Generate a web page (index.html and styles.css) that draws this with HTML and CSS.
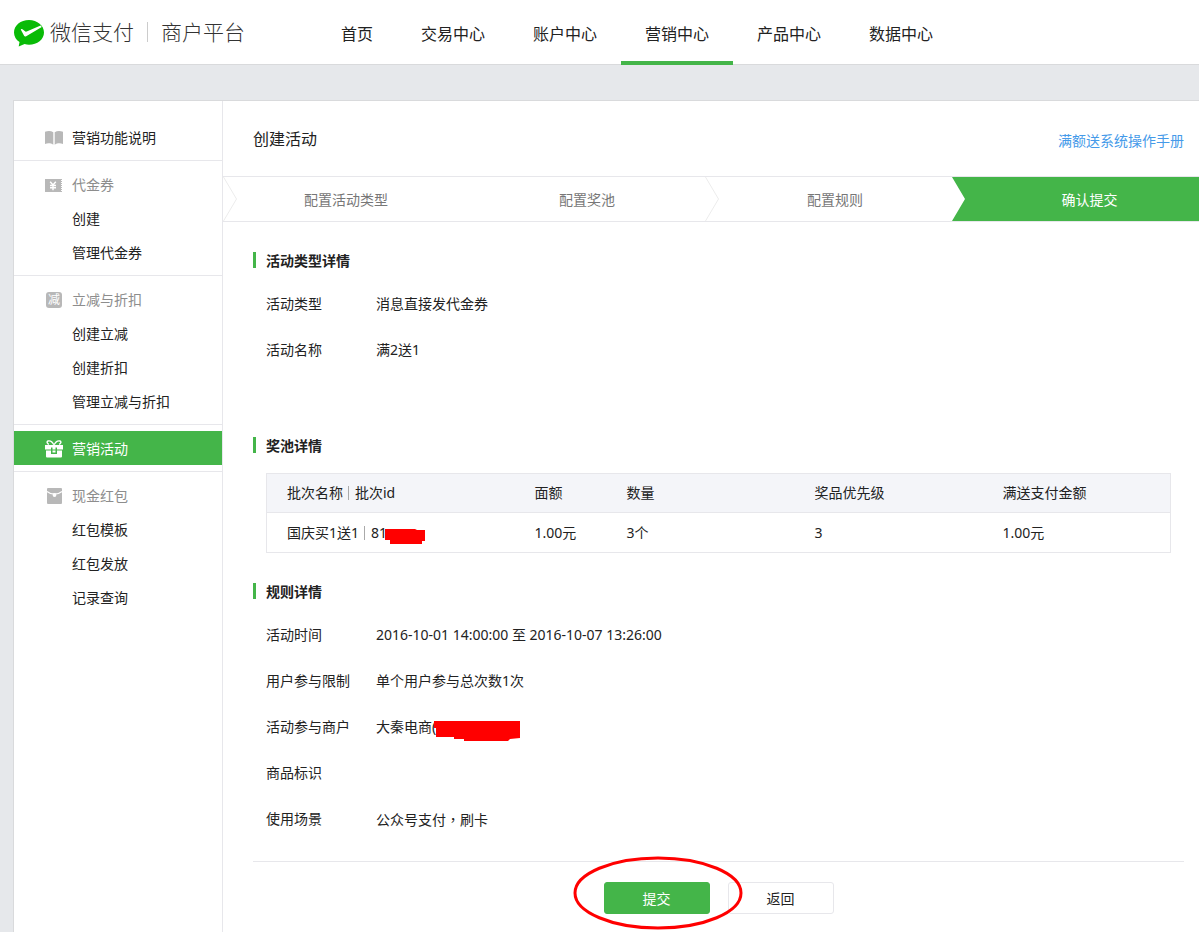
FILE: index.html
```html
<!DOCTYPE html>
<html lang="zh-CN">
<head>
<meta charset="utf-8">
<meta name="viewport" content="width=device-width, initial-scale=1">
<title>微信支付 商户平台</title>
<link rel="stylesheet" href="styles.css">
</head>
<body>
<header class="header">
  <a class="brand" href="#">
    <svg class="brand-mark" width="30" height="27" viewBox="0 0 30 27" aria-hidden="true">
      <path fill="#09bb07" d="M15 0C6.700 0 0 5.500 0 12.400c0 3.900 2.100 7.300 5.500 9.600L4.700 26.600 10.600 24.100c1.400.4 2.900.6 4.400.6 8.300 0 15-5.500 15-12.300S23.300 0 15 0z"/>
      <path fill="#fff" d="M7.100 9c.5-.3 1 0 1.400.3l2.900 2.100c.4.300.8.300 1.300.1L26.600 5.400l1.200 1.600L12.200 16.200c-.8.500-1.700.4-2.100-.5L7 10c-.2-.4-.2-.7.100-1z"/>
    </svg>
    <span class="brand-name">微信支付</span>
    <span class="brand-sub">商户平台</span>
  </a>
  <nav class="nav">
    <a href="#">首页</a>
    <a href="#">交易中心</a>
    <a href="#">账户中心</a>
    <a class="is-active" href="#">营销中心</a>
    <a href="#">产品中心</a>
    <a href="#">数据中心</a>
  </nav>
</header>

<div class="panel">
  <aside class="sidebar">
    <div class="group">
      <a class="item" href="#">
        <svg class="item-icon" width="18" height="16" viewBox="0 0 18 16"><path fill="#b8b8b8" d="M0 1.800C3 .7 6 .8 8.300 2.200V14.700C6 13.200 3 13 0 13.900zM18 1.800C15 .7 12 .8 9.700 2.200V14.700C12 13.200 15 13 18 13.900z"/></svg>
        营销功能说明
      </a>
    </div>
    <div class="group">
      <div class="item item-head">
        <svg class="item-icon" width="18" height="16" viewBox="0 0 18 16"><path fill="#b8b8b8" d="M0 2h16v13H0z"/><path stroke="#b8b8b8" stroke-width="1" stroke-dasharray="1 1" d="M16.500 2v13"/><path fill="none" stroke="#fff" stroke-width="1.400" d="M5.200 4.700 8 8l2.800-3.300M8 8v5.200M5 8.500h6M5 10.700h6"/></svg>
        代金券
      </div>
      <a class="item" href="#">创建</a>
      <a class="item" href="#">管理代金券</a>
    </div>
    <div class="group">
      <div class="item item-head">
        <span class="item-icon badge" aria-hidden="true">减</span>
        立减与折扣
      </div>
      <a class="item" href="#">创建立减</a>
      <a class="item" href="#">创建折扣</a>
      <a class="item" href="#">管理立减与折扣</a>
    </div>
    <div class="group">
      <a class="item is-active" href="#">
        <svg class="item-icon" width="18" height="18" viewBox="0 0 18 18"><path fill="none" stroke="#fff" stroke-width="1.400" d="M8.800 4.800C7.500 2 5.200.5 3 1 1.400 1.600 2.200 4 4 4.300M9.200 4.800C10.500 2 12.800.5 15 1 16.600 1.600 15.800 4 14 4.300"/><path fill="#fff" d="M0 5h18v4.500H0zM1 10.500h16v6a1 1 0 0 1-1 1H2a1 1 0 0 1-1-1z"/><path fill="#44b549" d="M6 7.500h1.500v5h3v-5H12V14H6z"/></svg>
        营销活动
      </a>
    </div>
    <div class="group">
      <div class="item item-head">
        <svg class="item-icon" width="18" height="16" viewBox="0 0 18 16"><path fill="#b8b8b8" d="M3 0h13a1 1 0 0 1 1 1v14a1 1 0 0 1-1 1H3a1 1 0 0 1-1-1V1a1 1 0 0 1 1-1z"/><path fill="none" stroke="#fff" stroke-width="1.200" d="M2 3.500c4.500 3.600 10.500 3.600 15 0"/><circle cx="9.500" cy="7" r="1.900" fill="#fff"/></svg>
        现金红包
      </div>
      <a class="item" href="#">红包模板</a>
      <a class="item" href="#">红包发放</a>
      <a class="item" href="#">记录查询</a>
    </div>
  </aside>

  <main class="content">
    <div class="title-bar">
      <h1>创建活动</h1>
      <a href="#">满额送系统操作手册</a>
    </div>

    <ol class="steps">
      <li class="step step-first"><svg class="arrow" width="15" height="44" viewBox="0 0 15 44"><path d="M.5 0 13.500 22 .5 44"/></svg>配置活动类型</li>
      <li class="step step-pool">配置奖池</li>
      <li class="step step-rule"><svg class="arrow" width="15" height="44" viewBox="0 0 15 44"><path d="M.5 0 13.500 22 .5 44"/></svg>配置规则</li>
      <li class="step step-current" aria-current="step">确认提交</li>
    </ol>

    <div class="body">
      <section class="section section-type">
        <h2>活动类型详情</h2>
        <dl class="fields">
          <div><dt>活动类型</dt><dd>消息直接发代金券</dd></div>
          <div><dt>活动名称</dt><dd>满2送1</dd></div>
        </dl>
      </section>

      <section class="section">
        <h2>奖池详情</h2>
        <table class="table">
          <thead>
            <tr><th class="col-name">批次名称<i class="sep"></i>批次id</th><th class="col-value">面额</th><th>数量</th><th>奖品优先级</th><th>满送支付金额</th></tr>
          </thead>
          <tbody>
            <tr><td>国庆买1送1<i class="sep"></i>81<svg class="mask mask-id" width="40" height="16" viewBox="0 0 40 16"><path fill="#f00" d="M0 0h30l2 1h8v11h-3v3H5v-4H0z"/></svg></td><td>1.00元</td><td>3个</td><td>3</td><td>1.00元</td></tr>
          </tbody>
        </table>
      </section>

      <section class="section">
        <h2>规则详情</h2>
        <dl class="fields">
          <div><dt>活动时间</dt><dd>2016-10-01 14:00:00 至 2016-10-07 13:26:00</dd></div>
          <div><dt>用户参与限制</dt><dd>单个用户参与总次数1次</dd></div>
          <div><dt>活动参与商户</dt><dd>大秦电商(<svg class="mask" width="86" height="20" viewBox="0 0 86 20"><path fill="#f00" d="M0 0h86v17l-10 1-2 2H30v-2H20v-2H2V7H0z"/></svg></dd></div>
          <div><dt>商品标识</dt><dd></dd></div>
          <div><dt>使用场景</dt><dd>公众号支付<span lang="zh-TW" class="comma">，</span>刷卡</dd></div>
        </dl>
      </section>

      <div class="actions">
        <button class="btn btn-primary" type="submit">提交</button>
        <button class="btn" type="button">返回</button>
        <svg class="ring" width="170" height="76" viewBox="0 0 170 76" aria-hidden="true"><ellipse cx="85" cy="38" rx="83" ry="35" fill="none" stroke="#f00" stroke-width="3"/></svg>
      </div>
    </div>
  </main>
</div>
</body>
</html>
```

FILE: styles.css
```css
* {
  box-sizing: border-box;
}

body {
  margin: 0;
  min-height: 100vh;
  display: flex;
  flex-direction: column;
  background: #e6e8eb;
  color: #222;
  font: 14px/22px "Noto Sans", "Noto Sans CJK SC", sans-serif;
}

a {
  color: inherit;
  text-decoration: none;
}

h1, h2, ol, dl, dd {
  margin: 0;
  padding: 0;
}

/* Header */
.header {
  display: flex;
  height: 65px;
  padding-left: 14px;
  background: #fff;
  border-bottom: 1px solid #d9dadc;
}

.brand {
  display: flex;
  align-items: center;
  width: 303px;
  color: #333;
  font-size: 21px;
  font-weight: 300;
  font-family: "Noto Sans CJK SC", sans-serif;
}

.brand-mark {
  margin: 2px 6px 0 0;
}

.brand-name {
  line-height: 20px;
  padding-bottom: 2px;
}

.brand-sub {
  margin-left: 13px;
  padding: 0 0 2px 13px;
  border-left: 1px solid #ccc;
  line-height: 18px;
}

.nav {
  display: flex;
  font-size: 16px;
}

.nav a {
  height: 65px;
  padding: 0 24px;
  line-height: 68px;
}

.nav .is-active {
  border-bottom: 4px solid #44b549;
}

/* Panel */
.panel {
  flex: 1;
  display: flex;
  margin: 35px 0 0 13px;
  background: #fff;
  border: solid #d9dadc;
  border-width: 1px 0 0 1px;
}

.sidebar {
  flex: none;
  width: 209px;
  padding-top: 13px;
  border-right: 1px solid #e7e7eb;
}

.group {
  padding: 6px 0;
  border-bottom: 1px solid #e7e7eb;
}

.group:last-child {
  border-bottom: 0;
}

.item {
  display: flex;
  align-items: center;
  height: 34px;
  padding: 2px 0 0 58px;
}

.item-head {
  color: #8d8d8d;
}

.item.is-active {
  background: #44b549;
  color: #fff;
}

.item-icon {
  margin: 0 9px 0 -27px;
}

.badge {
  width: 16px;
  height: 16px;
  margin: 0 10px 0 -26px;
  border-radius: 3px;
  background: #b8b8b8;
  color: #fff;
  font-size: 12px;
  line-height: 16px;
  text-align: center;
}

/* Content */
.content {
  flex: 1;
  min-width: 0;
}

.title-bar {
  display: flex;
  align-items: center;
  justify-content: space-between;
  height: 75px;
  padding: 0 15px 0 30px;
}

.title-bar h1 {
  font-size: 16px;
  font-weight: 400;
}

.title-bar a {
  padding-top: 4px;
  color: #459ae9;
}

.steps {
  display: grid;
  grid-template-columns: 241fr 241fr 247fr 247fr;
  border: solid #e7e7eb;
  border-width: 1px 0;
  color: #777;
  line-height: 46px;
  text-align: center;
  list-style: none;
}

.step {
  position: relative;
  height: 44px;
}

.step-first,
.step-pool {
  padding-left: 5px;
}

.step-rule {
  padding-left: 13px;
}

.step-current {
  padding-left: 28px;
  background: #44b549;
  color: #fff;
  clip-path: polygon(0 0, 100% 0, 100% 100%, 0 100%, 13px 50%);
}

.arrow {
  position: absolute;
  left: 0;
  top: 0;
  fill: none;
  stroke: #ececec;
}

.body {
  padding: 30px 15px 18px 30px;
}

.section {
  margin-bottom: 30px;
}

.section-type {
  margin-bottom: 76px;
}

.section h2 {
  height: 16px;
  padding-left: 10px;
  border-left: 3px solid #44b549;
  font-size: 14px;
  font-weight: 700;
  line-height: 18px;
}

.fields {
  display: grid;
  gap: 24px;
  margin: 25px 0 0 13px;
}

.fields div {
  display: flex;
}

.fields dt {
  width: 110px;
}

.comma {
  font-family: "Noto Sans CJK TC", sans-serif;
}

.table {
  width: calc(100% - 26px);
  margin: 20px 13px 0;
  border: 1px solid #e7e7eb;
  border-collapse: collapse;
  table-layout: fixed;
}

.table th,
.table td {
  height: 40px;
  padding: 0 0 0 20px;
  font-weight: 400;
  text-align: left;
}

.table th {
  height: 39px;
  background: #f4f5f9;
  border-bottom: 1px solid #e7e7eb;
}

.table .col-name {
  width: 248px;
}

.table .col-value {
  width: 92px;
}

.sep {
  display: inline-block;
  width: 1px;
  height: 14px;
  margin: 0 6px 0 5px;
  background: #aaa;
  vertical-align: -2px;
}

.mask {
  margin: -4px 0 -4px -2px;
  vertical-align: -5px;
}

.mask-id {
  vertical-align: -3px;
}

.actions {
  position: relative;
  display: flex;
  justify-content: center;
  gap: 18px;
  padding-top: 20px;
  border-top: 1px solid #e7e7eb;
}

.btn {
  width: 106px;
  height: 32px;
  padding: 2px 0 0;
  border: 1px solid #e7e7eb;
  border-radius: 3px;
  background: #fff;
  color: #222;
  font: inherit;
}

.btn-primary {
  border-color: #44b549;
  background: #44b549;
  color: #fff;
}

/* Highlight ring around the submit button */
.ring {
  position: absolute;
  top: -7px;
  left: calc(50% - 146px);
  pointer-events: none;
}
```
